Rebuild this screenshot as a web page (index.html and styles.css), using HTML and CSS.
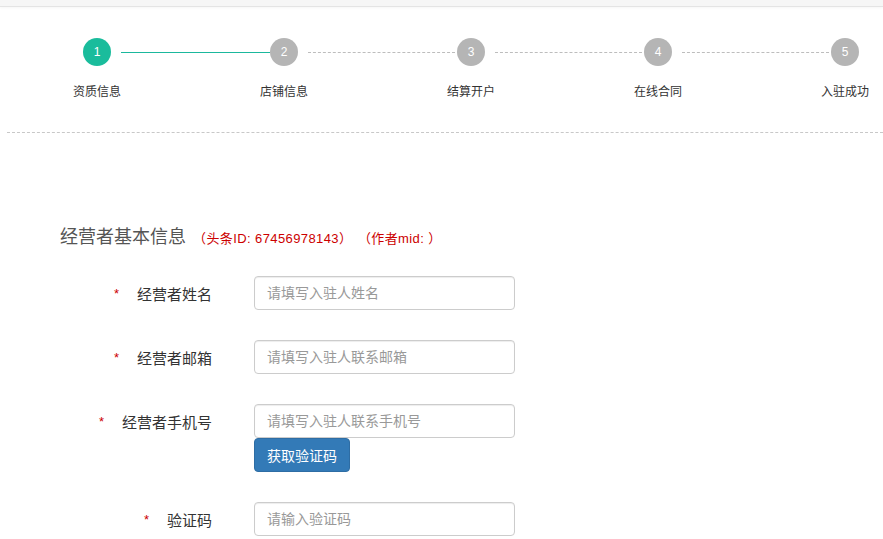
FILE: index.html
```html
<!DOCTYPE html>
<html lang="zh-CN">
<head>
<meta charset="utf-8">
<title>入驻</title>
<link rel="stylesheet" href="styles.css">
</head>
<body>
<div class="topbar"></div>
<div class="steps">
  <div class="step done"><div class="circle">1</div><div class="step-label">资质信息</div></div>
  <div class="step"><div class="circle">2</div><div class="step-label">店铺信息</div></div>
  <div class="step"><div class="circle">3</div><div class="step-label">结算开户</div></div>
  <div class="step"><div class="circle">4</div><div class="step-label">在线合同</div></div>
  <div class="step last"><div class="circle">5</div><div class="step-label">入驻成功</div></div>
</div>
<div class="divider"></div>
<div class="content">
  <h2 class="section-title">经营者基本信息 <span class="note">（头条ID: 67456978143）</span><span class="note gap">（作者mid: ）</span></h2>
  <form class="form">
    <div class="row">
      <label class="label"><span class="req">*</span>经营者姓名</label>
      <div class="field"><input class="input" type="text" placeholder="请填写入驻人姓名"></div>
    </div>
    <div class="row">
      <label class="label"><span class="req">*</span>经营者邮箱</label>
      <div class="field"><input class="input" type="text" placeholder="请填写入驻人联系邮箱"></div>
    </div>
    <div class="row">
      <label class="label"><span class="req">*</span>经营者手机号</label>
      <div class="field">
        <input class="input" type="text" placeholder="请填写入驻人联系手机号">
        <button class="btn" type="button">获取验证码</button>
      </div>
    </div>
    <div class="row">
      <label class="label"><span class="req">*</span>验证码</label>
      <div class="field"><input class="input" type="text" placeholder="请输入验证码"></div>
    </div>
  </form>
</div>
</body>
</html>
```
FILE: styles.css
```css
html, body {
  margin: 0;
  padding: 0;
  background: #fff;
  overflow: hidden;
}
body {
  font-family: "Liberation Sans", "Noto Sans CJK SC", Arial, sans-serif;
  color: #333;
  width: 883px;
  height: 539px;
}
.topbar {
  height: 6px;
  background: #f6f6f6;
  border-bottom: 1px solid #e4e4e4;
  box-shadow: 0 1px 3px rgba(0,0,0,0.04);
}
.steps {
  display: grid;
  grid-template-columns: repeat(5, 187px);
  padding: 31px 0 0 3.5px;
  box-sizing: border-box;
  height: 125px;
}
.step {
  position: relative;
  display: flex;
  flex-direction: column;
  align-items: center;
}
.step::after {
  content: "";
  position: absolute;
  top: 14px;
  left: calc(50% + 24px);
  width: 147px;
  border-top: 1px dashed #bdbdbd;
}
.step.done::after {
  border-top: 1px solid #1bb89d;
  width: 149px;
}
.step.last::after { display: none; }
.circle {
  width: 28px;
  height: 28px;
  border-radius: 50%;
  background: #b5b5b5;
  color: #fff;
  font-size: 12px;
  line-height: 28px;
  text-align: center;
}
.step.done .circle { background: #1abc9c; }
.step-label {
  margin-top: 18px;
  font-size: 12px;
  line-height: 16px;
  color: #333;
  white-space: nowrap;
}
.divider {
  margin-left: 7px;
  border-top: 1px dashed #c8c8c8;
}
.content {
  padding: 91px 0 0 60px;
}
.section-title {
  margin: 0;
  height: 26px;
  font-size: 18px;
  font-weight: normal;
  line-height: 26px;
  color: #555;
}
.note {
  font-size: 13px;
  letter-spacing: 0.4px;
  color: #cc0000;
  margin-left: 2px;
}
.note.gap { margin-left: 12px; }
.form {
  margin-top: 26px;
}
.row {
  display: flex;
  align-items: flex-start;
  margin-bottom: 30px;
}
.label {
  width: 152px;
  height: 34px;
  flex: none;
  display: flex;
  align-items: center;
  justify-content: flex-end;
  font-size: 15px;
  color: #333;
  white-space: nowrap;
}
.req {
  color: #c00;
  font-size: 13px;
  margin-right: 18px;
}
.field {
  margin-left: 42px;
  display: flex;
  flex-direction: column;
  align-items: flex-start;
}
.input {
  box-sizing: border-box;
  display: block;
  width: 261px;
  height: 34px;
  padding: 0 12px;
  border: 1px solid #ccc;
  border-radius: 4px;
  font-family: "Liberation Sans", "Noto Sans CJK SC", Arial, sans-serif;
  font-size: 14px;
  color: #555;
  outline: none;
  box-shadow: inset 0 1px 1px rgba(0,0,0,0.075);
}
.input::placeholder { color: #999; }
.btn {
  box-sizing: border-box;
  display: block;
  height: 34px;
  width: 96px;
  padding: 0 12px;
  border: 1px solid #2e6da4;
  border-radius: 4px;
  background: #337ab7;
  color: #fff;
  font-family: "Liberation Sans", "Noto Sans CJK SC", Arial, sans-serif;
  font-size: 14px;
  cursor: pointer;
}
```
